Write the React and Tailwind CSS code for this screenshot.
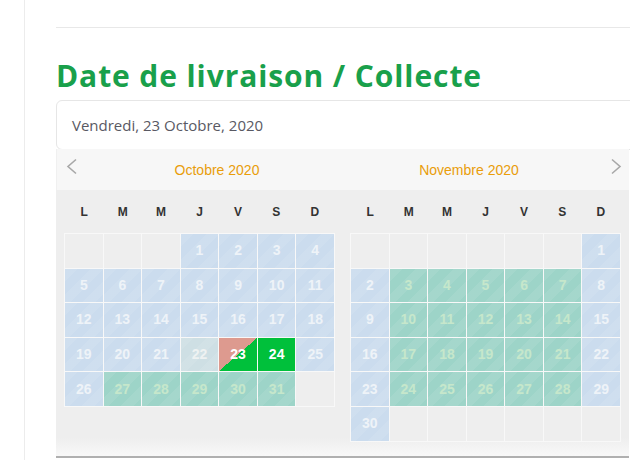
import React from "react";

const stripe =
  "bg-[repeating-linear-gradient(135deg,rgba(255,255,255,0.08)_0px,rgba(255,255,255,0.08)_9px,transparent_9px,transparent_18px)]";

const octDays = [
  null, null, null, "b1", "b2", "b3", "b4",
  "b5", "b6", "b7", "b8", "b9", "b10", "b11",
  "b12", "b13", "b14", "b15", "b16", "b17", "b18",
  "b19", "b20", "b21", "g22", "s23", "c24", "b25",
  "b26", "t27", "t28", "t29", "t30", "t31", null,
];

const novDays = [
  null, null, null, null, null, null, "b1",
  "b2", "t3", "t4", "t5", "t6", "t7", "b8",
  "b9", "t10", "t11", "t12", "t13", "t14", "b15",
  "b16", "t17", "t18", "t19", "t20", "t21", "b22",
  "b23", "t24", "t25", "t26", "t27", "t28", "b29",
  "b30", null, null, null, null, null, null,
];

function Cell({ d }) {
  if (!d) return <div className="bg-[#eeeeee]" />;
  const kind = d[0];
  const n = d.slice(1);
  let cls = "";
  if (kind === "b") cls = `bg-[#cbdcee] text-[#eef3f8] ${stripe}`;
  else if (kind === "t") cls = `bg-[#9dd4c8] text-[#c6e7cb] ${stripe}`;
  else if (kind === "g") cls = `bg-[#cedfe4] text-[#eef2f2] ${stripe}`;
  else if (kind === "s")
    cls = "bg-[linear-gradient(to_bottom_right,#dd9a8f_50%,#00c03b_50%)] text-white";
  else if (kind === "c") cls = "bg-[#00c03b] text-white";
  return (
    <div
      className={`flex items-center justify-center text-[14px] font-bold ${cls}`}
      style={{ fontFamily: '"Liberation Sans", Arial, sans-serif' }}
    >
      {n}
    </div>
  );
}

function Month({ days }) {
  const heads = ["L", "M", "M", "J", "V", "S", "D"];
  return (
    <div className="w-[271px]">
      <div className="grid grid-cols-7 h-[43px] items-center px-px">
        {heads.map((h, i) => (
          <div
            key={i}
            className="text-center text-[12px] font-bold text-[#333333]"
            style={{ fontFamily: '"Liberation Sans", Arial, sans-serif' }}
          >
            {h}
          </div>
        ))}
      </div>
      <div className="grid grid-cols-7 auto-rows-[33.6px] gap-px p-px bg-[#f8f8f8]">
        {days.map((d, i) => (
          <Cell key={i} d={d} />
        ))}
      </div>
    </div>
  );
}

export default function App() {
  return (
    <div className="w-[630px] h-[460px] overflow-hidden bg-white flex">
      <div className="w-[25px] shrink-0 border-r border-[#ececec]" />
      <div className="flex-1 pl-[31px] min-w-0">
        <div className="mt-[27px] border-t border-[#e8e8e8]" />
        <h1
          className="mt-[30px] text-[30px] leading-[36px] font-bold text-[#19a04b] whitespace-nowrap tracking-[0.9px]"
          style={{ fontFamily: '"Open Sans", sans-serif' }}
        >
          Date de livraison / Collecte
        </h1>
        <div className="mt-[6px] w-[600px] h-[50px] border border-[#e6e6e6] rounded-md flex items-center pl-[15px]">
          <span
            className="text-[15px] text-[#595963]"
            style={{ fontFamily: '"Open Sans", sans-serif' }}
          >
            Vendredi, 23 Octobre, 2020
          </span>
        </div>
        <div className="-mt-px w-[573px] border-b-2 border-[#b0b0b0]">
          <div className="h-[41px] bg-[#f7f7f7] border-l border-[#f0f0f0] flex items-center">
            <div className="w-[34px] shrink-0 pl-[8px]">
              <svg width="14" height="18" viewBox="0 0 14 18" className="-mt-[6px]">
                <path d="M11 1.5 L3 8.5 L11 15.5" fill="none" stroke="#a8a8a8" strokeWidth="1.6" />
              </svg>
            </div>
            <div
              className="w-[252px] text-center text-[14px] text-[#e99d0a] mt-[1px]"
              style={{ fontFamily: '"Liberation Sans", Arial, sans-serif' }}
            >
              Octobre 2020
            </div>
            <div
              className="w-[252px] text-center text-[14px] text-[#e99d0a] mt-[1px]"
              style={{ fontFamily: '"Liberation Sans", Arial, sans-serif' }}
            >
              Novembre 2020
            </div>
            <div className="flex-1 flex justify-end pr-[6px]">
              <svg width="14" height="18" viewBox="0 0 14 18" className="-mt-[6px]">
                <path d="M3 1.5 L11 8.5 L3 15.5" fill="none" stroke="#a8a8a8" strokeWidth="1.6" />
              </svg>
            </div>
          </div>
          <div className="h-[266px] bg-[linear-gradient(to_bottom,#eeeeee_0%,#eeeeee_93%,#f8f8f8_100%)] flex gap-[15px] px-[8px]">
            <Month days={octDays} />
            <Month days={novDays} />
          </div>
        </div>
      </div>
    </div>
  );
}
